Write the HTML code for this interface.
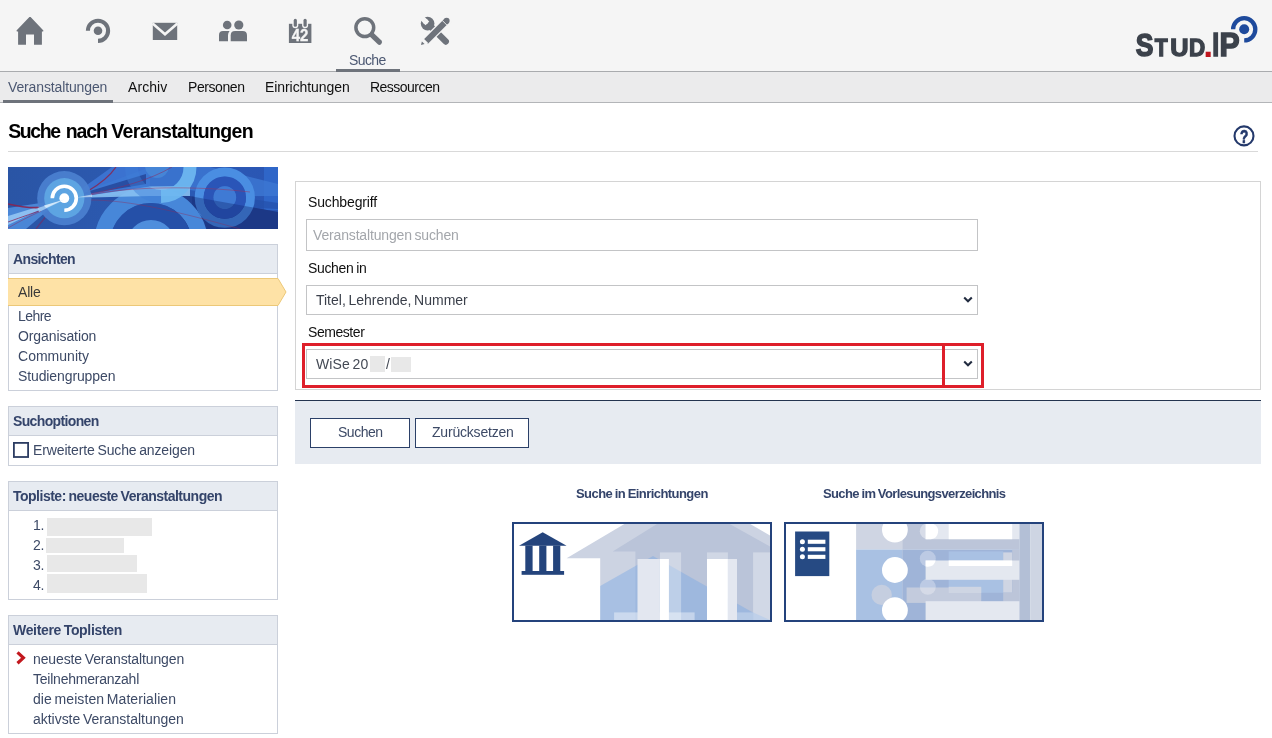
<!DOCTYPE html>
<html lang="de">
<head>
<meta charset="utf-8">
<title>Suche nach Veranstaltungen - Stud.IP</title>
<style>
*{box-sizing:border-box;margin:0;padding:0}
html,body{width:1272px;height:738px;overflow:hidden;background:#fff}
body{font-family:"Liberation Sans",sans-serif;font-size:14px;color:#000;position:relative}
.abs{position:absolute}
.t{position:absolute;white-space:nowrap;line-height:1;display:block;will-change:transform}
#header{left:0;top:0;width:1272px;height:72px;background:#f5f5f5;border-bottom:1px solid #a9abae}
#tabs{left:0;top:72px;width:1272px;height:31px;background:#ebebec;border-bottom:1px solid #b3b5b8}
.wid{position:absolute;left:8px;width:270px;border:1px solid #cbd0da;background:#fff}
.wid .hd{position:absolute;left:0;top:0;width:268px;height:29px;background:#e7ebf1;border-bottom:1px solid #cbd0da}
.fld{position:absolute;left:306px;width:672px;border:1px solid #c3c4c6;background:#fff}
.btn{position:absolute;top:418px;height:30px;border:1px solid #2b4068;background:#fff}
.gb{position:absolute;background:#e8e8e8}
svg{position:absolute;overflow:visible;will-change:transform}
</style>
</head>
<body>
<!-- HEADER -->
<div id="header" class="abs"></div>
<div id="tabs" class="abs"></div>
<div class="abs" style="left:336px;top:69px;width:64px;height:3px;background:#6e737b"></div>
<div class="abs" style="left:3px;top:100px;width:110px;height:3px;background:#6e737b"></div>

<!-- nav icons -->
<svg id="icons" style="left:0;top:0" width="470" height="72" viewBox="0 0 470 72" fill="#6e737b">
  <!-- home -->
  <path d="M29.4 17.1 L30.6 17.1 L43.4 30.6 L43.2 31.4 L41.9 31.4 L41.9 44.8 L34 44.8 L34 34.4 L26 34.4 L26 44.8 L18.1 44.8 L18.1 31.4 L16.8 31.4 L16.5 30.6 Z"/>
  <!-- studip -->
  <circle cx="98" cy="30.8" r="4.3"/>
  <path d="M87.9 30.8 A10.1 10.1 0 1 1 98 40.9" fill="none" stroke="#6e737b" stroke-width="4.1"/>
  <!-- mail -->
  <rect x="152.8" y="22.8" width="24.4" height="17.2"/>
  <path d="M152.6 23.4 L165 34.2 L177.4 23.4" fill="none" stroke="#f5f5f5" stroke-width="2.6"/>
  <!-- people -->
  <circle cx="227.2" cy="25" r="4.3"/>
  <circle cx="238.8" cy="25" r="4.6"/>
  <path d="M219 41.3 L219 35 Q219 31 223 31 L229.6 31 Q228 32.8 228 35.2 L228 41.3 Z"/>
  <path d="M230.7 41.3 L230.7 35.4 Q230.7 31 235 31 L242.6 31 Q247 31 247 35.4 L247 41.3 Z"/>
  <!-- calendar -->
  <rect x="288.9" y="23.8" width="22.5" height="19.2"/>
  <rect x="292.3" y="17" width="6" height="11.2" rx="3" fill="#f5f5f5"/>
  <rect x="302.1" y="17" width="6" height="11.2" rx="3" fill="#f5f5f5"/>
  <rect x="293.7" y="18.8" width="3.2" height="8" rx="1.6"/>
  <rect x="303.5" y="18.8" width="3.2" height="8" rx="1.6"/>
  <text x="300" y="41" text-anchor="middle" font-family="Liberation Sans,sans-serif" font-weight="700" font-size="16.2" fill="#f5f5f5" stroke="#f5f5f5" stroke-width="0.35" textLength="16.6" lengthAdjust="spacingAndGlyphs">42</text>
  <!-- search -->
  <circle cx="364.8" cy="27.6" r="8.9" fill="none" stroke="#6e737b" stroke-width="3.5"/>
  <path d="M371.8 34.8 L379.4 42.2" fill="none" stroke="#6e737b" stroke-width="5.2" stroke-linecap="round"/>
  <!-- tools -->
  <g id="tools">
    <path d="M428.2 24 L445.8 41.6" fill="none" stroke="#6e737b" stroke-width="6.3" stroke-linecap="round"/>
    <circle cx="427.6" cy="23.6" r="6.8"/>
    <path d="M427.4 23.4 L419 15 " fill="none" stroke="#f5f5f5" stroke-width="5.2"/>
    <circle cx="425.6" cy="21.6" r="2.6" fill="#f5f5f5"/>
    <path d="M448.4 19 L424.6 42.8" fill="none" stroke="#f5f5f5" stroke-width="8.6" stroke-linecap="butt"/>
    <path d="M446.6 20.8 L425.8 41.6" fill="none" stroke="#6e737b" stroke-width="6" stroke-linecap="butt"/>
    <circle cx="446.6" cy="20.8" r="3"/>
    <path d="M442.4 20.6 L446.8 25" stroke="#f5f5f5" stroke-width="0.9" fill="none"/>
    <path d="M423 39 L427.4 43.4" stroke="#f5f5f5" stroke-width="1.6" fill="none"/>
    <path d="M421 44.9 L421.9 41.4 L424.6 44 Z"/>
  </g>
</svg>

<!-- LOGO -->
<svg id="logo" style="left:1130px;top:10px" width="135" height="55" viewBox="1130 10 135 55" font-family="Liberation Sans,sans-serif" font-weight="700" fill="#3c424b" stroke="#3c424b" stroke-linejoin="miter">
  <text transform="translate(1135.80 56.38) scale(0.833 1)" font-size="31.8" stroke-width="1.60">S</text>
  <text transform="translate(1154.64 56.45) scale(0.886 1)" font-size="23.9" stroke-width="1.30">T</text>
  <text transform="translate(1170.13 56.45) scale(1.059 1)" font-size="23.9" stroke-width="1.30">U</text>
  <text transform="translate(1189.08 56.45) scale(0.939 1)" font-size="23.9" stroke-width="1.30">D</text>
  <text transform="translate(1203.30 57.20)" font-size="35.7" stroke="none" fill="#c0161f">.</text>
  <text transform="translate(1212.30 56.35) scale(0.774 1)" font-size="32.3" stroke-width="1.50">I</text>
  <text transform="translate(1219.44 56.35) scale(0.934 1)" font-size="32.3" stroke-width="1.50">P</text>
  <circle cx="1244.2" cy="29.3" r="5" fill="#1e4a9c" stroke="none"/>
  <path d="M1233.1 29.3 A11.1 11.1 0 1 1 1244.2 40.4" fill="none" stroke="#1e4a9c" stroke-width="4.3"/>
</svg>

<!-- help icon -->
<svg style="left:1232px;top:124px" width="24" height="24" viewBox="0 0 24 24">
  <circle cx="12" cy="11.9" r="9.5" fill="#fff" stroke="#24396b" stroke-width="2.1"/>
  <text transform="translate(12.1 18.8) scale(0.72 1)" text-anchor="middle" font-family="Liberation Sans,sans-serif" font-weight="700" font-size="19" fill="#24396b" stroke="#24396b" stroke-width="0.7">?</text>
</svg>
<div class="abs" style="left:8px;top:151px;width:1250px;height:1px;background:#d9d9d9"></div>

<!-- SIDEBAR -->
<svg id="sbimg" style="left:8px;top:167px;overflow:hidden" width="270" height="62" viewBox="8 167 270 62">
  <defs>
    <clipPath id="sbc"><rect x="8" y="167" width="270" height="62"/></clipPath>
    <linearGradient id="sbg" x1="0" y1="0" x2="1" y2="0">
      <stop offset="0" stop-color="#2a55a5"/><stop offset="0.5" stop-color="#2c5ab2"/><stop offset="1" stop-color="#2a56b4"/>
    </linearGradient>
  </defs>
  <g clip-path="url(#sbc)">
    <rect x="8" y="167" width="270" height="62" fill="url(#sbg)"/>
    <rect x="264" y="167" width="14" height="43" fill="#2f66c8"/>
    <!-- beams to right -->
    <path d="M70 197 L112 167 L150 167 L150 190 Z" fill="#3b72d0"/>
    <path d="M70 197 L150 167 L210 167 L278 184 L278 196 Z" fill="#3d78d3" opacity=".8"/>
    <path d="M70 197 L146 174 L146 184 Z" fill="#24479a" opacity=".85"/>
    <path d="M72 198 L190 190 L278 203 L278 209 Z" fill="#2450aa" opacity=".7"/>
    <!-- beams to left -->
    <path d="M60 200 L8 208 L8 229 L26 229 Z" fill="#4a86d6"/>
    <path d="M60 200 L8 216 L8 225 Z" fill="#8cbff1"/>
    <!-- right dark lower wedge -->
    <path d="M184 195 L278 212 L278 229 L150 229 Z" fill="#213f8e"/>
    <!-- big bottom ring -->
    <circle cx="151" cy="244" r="49" fill="none" stroke="#4787d9" stroke-width="16"/>
    <circle cx="151" cy="244" r="41" fill="#2550a8"/>
    <circle cx="151" cy="244" r="24" fill="#4f8edc"/>
    <!-- light beam over ring top -->
    <path d="M72 198 L150 186.5 L190 186 L190 196 L150 196 Z" fill="#8cc4f3" opacity=".85"/>
    <!-- top crescent ring -->
    <path d="M190 167 A29.5 29.5 0 0 1 161 196.5" fill="none" stroke="#6db6ef" stroke-width="13" opacity=".95"/>
    <path d="M161 196.5 A29.5 29.5 0 0 1 131.5 167" fill="none" stroke="#3f7fd8" stroke-width="13" opacity=".45"/>
    <circle cx="157" cy="166" r="12" fill="#4a8ad8" opacity=".8"/>
    <!-- right rings -->
    <circle cx="224.8" cy="197.6" r="25.6" fill="none" stroke="#4a8ee2" stroke-width="9"/>
    <circle cx="224.8" cy="197.6" r="16.3" fill="none" stroke="#2a55b8" stroke-width="9.8"/>
    <circle cx="224.8" cy="197.6" r="11.4" fill="#3f7ad4"/>
    <path d="M192 196.4 L278 212 L278 229 L207 229 A57 57 0 0 0 192 204 Z" fill="#16307c" opacity=".42"/>
    <!-- red curves (under the circles) -->
    <path d="M8 204 C25 208 38 209 50 206" fill="none" stroke="#8a2450" stroke-width="1.6" opacity=".9"/>
    <path d="M88 191 C100 184 110 176 116 167" fill="none" stroke="#8a2450" stroke-width="1.3" opacity=".85"/>
    <path d="M8 222 C22 217 36 212 48 208" fill="none" stroke="#8a2a60" stroke-width="1" opacity=".8"/>
    <path d="M8 228 C20 221 34 214 46 209" fill="none" stroke="#8a2a60" stroke-width=".8" opacity=".6"/>
    <path d="M90 195 C130 186 200 186 250 192" fill="none" stroke="#a03058" stroke-width=".8" opacity=".6"/>
    <path d="M90 194 C120 188 150 180 172 167" fill="none" stroke="#8a2a60" stroke-width=".9" opacity=".6"/>
    <path d="M90 200 C130 200 180 212 240 229" fill="none" stroke="#902a58" stroke-width=".8" opacity=".5"/>
    <path d="M36 229 C42 221 47 215 52 210" fill="none" stroke="#7a2a60" stroke-width="1.4" opacity=".6"/>
    <!-- left concentric -->
    <circle cx="64.3" cy="198.2" r="27.1" fill="#4a80d0" opacity=".93"/>
    <circle cx="64.3" cy="198.2" r="20.1" fill="#5da4e2"/>
    <path d="M64 200 L37.5 208 L39 212 Z" fill="#a8d2f6" opacity=".8"/>
    <path d="M52.3 198.2 A12 12 0 1 1 64.3 210.2" fill="none" stroke="#fff" stroke-width="3.6"/>
    <circle cx="64.3" cy="198.2" r="4.9" fill="#fff"/>
    <path d="M64.3 199.5 L44 205.5 L46 208 Z" fill="#d8ebfb" opacity=".9"/>
    <path d="M76 197.5 L92 194.5 L92 197 Z" fill="#cfe6fa" opacity=".7"/>
  </g>
</svg>

<div class="wid" style="top:244px;height:147px"><div class="hd"></div></div>
<svg style="left:8px;top:278px" width="280" height="28" viewBox="0 0 280 28">
  <path d="M0 0.5 L270 0.5 L278 14 L270 27.5 L0 27.5" fill="#fee2a6" stroke="#ecc878" stroke-width="1"/>
</svg>
<div class="wid" style="top:406px;height:60px"><div class="hd"></div></div>
<svg style="left:13px;top:442px" width="16" height="16" viewBox="0 0 16 16"><rect x="0.9" y="0.9" width="14.2" height="14.1" fill="#fff" stroke="#2c3c62" stroke-width="1.8"/></svg>
<div class="wid" style="top:481px;height:119px"><div class="hd"></div></div>
<div class="gb" style="left:46.7px;top:518.3px;width:105.3px;height:17.4px"></div>
<div class="gb" style="left:45.7px;top:538.3px;width:78.3px;height:14.4px"></div>
<div class="gb" style="left:46.7px;top:555px;width:90.3px;height:16.7px"></div>
<div class="gb" style="left:46.7px;top:574.3px;width:100.3px;height:18.4px"></div>
<div class="wid" style="top:615px;height:119px"><div class="hd"></div></div>
<svg style="left:16px;top:651.2px" width="10" height="13.6" viewBox="0 0 10 13.6">
  <path d="M1.5 1.3 L7.4 6.8 L1.5 12.3" fill="none" stroke="#c2181e" stroke-width="3.2"/>
</svg>

<!-- CONTENT -->
<div id="formbox" class="abs" style="left:295px;top:181px;width:966px;height:209px;border:1px solid #d4d4d4;background:#fff"></div>
<div class="fld" style="top:219px;height:32px"></div>
<div class="fld" style="top:285px;height:30px"></div>
<div class="fld" style="top:349px;height:30px"></div>
<div class="gb" style="left:370.2px;top:356.3px;width:14.5px;height:15.4px"></div>
<div class="gb" style="left:391px;top:357px;width:20px;height:14.7px"></div>
<svg style="left:963px;top:296.4px" width="10" height="8" viewBox="0 0 10 8"><path d="M1.2 1.6 L5 5.2 L8.8 1.6" fill="none" stroke="#222c40" stroke-width="2.1"/></svg>
<svg style="left:963px;top:359.5px" width="10" height="8" viewBox="0 0 10 8"><path d="M1.2 1.6 L5 5.2 L8.8 1.6" fill="none" stroke="#222c40" stroke-width="2.1"/></svg>
<!-- red highlight boxes -->
<div class="abs" style="left:302px;top:343px;width:643px;height:45px;border:3px solid #de1f2a"></div>
<div class="abs" style="left:942px;top:343px;width:42px;height:45px;border:3px solid #de1f2a"></div>

<div id="formfoot" class="abs" style="left:295px;top:400px;width:966px;height:64px;background:#e7ebf1;border-top:1px solid #24344f"></div>
<div class="btn" style="left:310px;width:100px"></div>
<div class="btn" style="left:415px;width:114px"></div>

<!-- TILES -->
<svg id="tile1" style="left:512px;top:522px" width="260" height="100" viewBox="512 522 260 100">
  <defs><clipPath id="t1c"><rect x="514" y="524" width="256" height="96"/></clipPath></defs>
  <rect x="513" y="523" width="258" height="98" fill="#fff" stroke="#24437c" stroke-width="2"/>
  <g clip-path="url(#t1c)">
    <path d="M566.6 558.3 L624.4 524 L750.2 524 L770 535.6 L770 620 L600.2 620 L600.2 558.3 Z" fill="#ccd3e2"/>
    <path d="M612.7 551.4 L657 524 L729.7 524 L770 546.5 L770 620 L635.4 620 L635.4 551.4 Z" fill="#bac4d9"/>
    <path d="M600.2 586 L653 556 L751.6 611.7 L770 620 L600.2 620 Z" fill="rgb(125,170,228)" fill-opacity=".444"/>
    <rect x="659.9" y="552.4" width="21.2" height="68" fill="#fff" fill-opacity=".32"/>
    <rect x="707" y="552.4" width="20.9" height="68" fill="#fff" fill-opacity=".32"/>
    <rect x="753.1" y="552.4" width="17" height="68" fill="#fff" fill-opacity=".34"/>
    <rect x="614.1" y="612.4" width="80.5" height="8" fill="#fff" fill-opacity=".4"/>
    <rect x="737" y="612.4" width="16.1" height="8" fill="#fff" fill-opacity=".25"/>
    <rect x="637.5" y="559" width="22.4" height="61" fill="#e3e7f0"/>
    <rect x="659.9" y="559" width="9" height="61" fill="#fff"/>
    <rect x="707" y="559" width="20.9" height="61" fill="#fff"/>
    <rect x="727.9" y="559" width="9.1" height="61" fill="#e3e7f0"/>
  </g>
  <g fill="#24447c">
    <path d="M542.7 532.2 L566.6 545.8 L519 545.8 Z"/>
    <rect x="525.3" y="545.6" width="7.3" height="26"/>
    <rect x="539.2" y="545.6" width="7.2" height="26"/>
    <rect x="553.1" y="545.6" width="7.2" height="26"/>
    <rect x="521.6" y="571" width="42.5" height="3.8"/>
  </g>
</svg>
<svg id="tile2" style="left:784px;top:522px" width="260" height="100" viewBox="784 522 260 100">
  <defs><clipPath id="t2c"><rect x="786" y="524" width="256" height="96"/></clipPath></defs>
  <rect x="785" y="523" width="258" height="98" fill="#fff" stroke="#24437c" stroke-width="2"/>
  <g clip-path="url(#t2c)">
    <rect x="856.1" y="524" width="46.1" height="25.5" fill="#cfd5e3"/>
    <rect x="902.2" y="524" width="117.1" height="25.5" fill="#bcc5d9"/>
    <rect x="856.1" y="549.5" width="46.1" height="70.5" fill="#a9c1e3"/>
    <rect x="902.2" y="549.5" width="117.1" height="70.5" fill="#9fb4d8"/>
    <rect x="1019.3" y="524" width="10.9" height="96" fill="#b3bfd6"/>
    <rect x="1030.2" y="524" width="12" height="96" fill="#ced5e3"/>
    <!-- second-row blue -->
    <rect x="948.7" y="551.4" width="54.5" height="48.6" fill="#a9c1e3"/>
    <rect x="981.2" y="592.8" width="22" height="7.4" fill="#9fb4d8"/>
    <rect x="1003.2" y="552.4" width="9" height="40.3" fill="#cfd5e3"/>
    <rect x="1003.2" y="592.7" width="16.1" height="9" fill="#bcc5d9"/>
    <rect x="1012.2" y="549.5" width="7.1" height="52" fill="#bcc5d9"/>
    <!-- grey rect -->
    <rect x="906.6" y="587.5" width="74.6" height="15.4" fill="#c3cbdd"/>
    <rect x="948.7" y="586.8" width="32.5" height="6.2" fill="#ced5e3"/>
    <circle cx="881.7" cy="594.9" r="10.2" fill="#c5cee0"/>
    <!-- big white circles -->
    <circle cx="894.9" cy="529.7" r="12.9" fill="#fff"/>
    <circle cx="894.9" cy="570" r="12.9" fill="#fff"/>
    <circle cx="894.9" cy="610.2" r="12.9" fill="#fff"/>
    <!-- small circles -->
    <circle cx="927.8" cy="531.2" r="8" fill="#fff" fill-opacity=".4"/>
    <circle cx="927.8" cy="558.7" r="8" fill="#fff" fill-opacity=".3"/>
    <circle cx="927.8" cy="586.8" r="8" fill="#fff" fill-opacity=".3"/>
    <!-- bars -->
    <rect x="925.6" y="524" width="93.7" height="15.2" fill="#e4e8f0"/>
    <rect x="948.7" y="524" width="63.5" height="15.2" fill="#fff"/>
    <path d="M925.6 524 L925.6 539.2 L931 539.2 A8 8 0 0 0 933.5 524 Z" fill="#fff"/>
    <rect x="925.6" y="560.5" width="93.7" height="19.3" fill="#e4e8f0"/>
    <rect x="948.7" y="560.5" width="63.5" height="5.5" fill="#fff"/>
    <path d="M925.6 560.5 L935.6 560.5 A8 8 0 0 1 927.8 566.7 L925.6 566.5 Z" fill="#fff"/>
    <rect x="925.6" y="601.2" width="93.7" height="19" fill="#e4e8f0"/>
  </g>
  <rect x="795.1" y="531.5" width="34.2" height="44.6" fill="#264a83"/>
  <g fill="#fff">
    <circle cx="802.4" cy="541.7" r="2.5"/><circle cx="802.4" cy="549.2" r="2.5"/><circle cx="802.4" cy="556.8" r="2.5"/>
    <rect x="807.8" y="539.7" width="17.6" height="4.1"/><rect x="807.8" y="547.2" width="17.6" height="4.1"/><rect x="807.8" y="554.8" width="17.6" height="4.1"/>
  </g>
</svg>

<!-- TEXT -->
<span class="t" style="left:349.3px;top:52.8px;font-size:14px;color:#4c5872;letter-spacing:-0.62px;">Suche</span>
<span class="t" style="left:8.3px;top:79.8px;font-size:14px;color:#4c5872;letter-spacing:-0.13px;">Veranstaltungen</span>
<span class="t" style="left:127.8px;top:79.8px;font-size:14px;color:#101010;letter-spacing:0.08px;">Archiv</span>
<span class="t" style="left:188.0px;top:79.8px;font-size:14px;color:#101010;letter-spacing:-0.43px;">Personen</span>
<span class="t" style="left:265.3px;top:79.8px;font-size:14px;color:#101010;letter-spacing:-0.07px;">Einrichtungen</span>
<span class="t" style="left:370.3px;top:79.8px;font-size:14px;color:#101010;letter-spacing:-0.53px;">Ressourcen</span>
<span class="t" style="left:0;top:122.1px;width:400px;height:19.5px;font-size:19.5px;font-weight:700;color:#000;"><span style="position:absolute;left:8.3px;top:0;letter-spacing:-1.43px">Suche</span> <span style="position:absolute;left:65.8px;top:0;letter-spacing:-1.15px">nach</span> <span style="position:absolute;left:111.3px;top:0;letter-spacing:-0.67px">Veranstaltungen</span></span>
<span class="t" style="left:13.3px;top:251.8px;font-size:14px;font-weight:700;color:#34446a;letter-spacing:-0.63px;">Ansichten</span>
<span class="t" style="left:17.7px;top:284.8px;font-size:14px;color:#3a3a3a;letter-spacing:-0.19px;">Alle</span>
<span class="t" style="left:18.3px;top:308.8px;font-size:14px;color:#3d4a66;letter-spacing:-0.56px;">Lehre</span>
<span class="t" style="left:18.3px;top:328.8px;font-size:14px;color:#3d4a66;letter-spacing:-0.09px;">Organisation</span>
<span class="t" style="left:18.3px;top:348.8px;font-size:14px;color:#3d4a66;letter-spacing:0.02px;">Community</span>
<span class="t" style="left:18.3px;top:368.8px;font-size:14px;color:#3d4a66;letter-spacing:-0.11px;">Studiengruppen</span>
<span class="t" style="left:13.3px;top:413.8px;font-size:14px;font-weight:700;color:#34446a;letter-spacing:-0.64px;">Suchoptionen</span>
<span class="t" style="left:33.3px;top:443.1px;font-size:14px;color:#3d4a66;letter-spacing:-0.13px;word-spacing:-1.06px;">Erweiterte Suche anzeigen</span>
<span class="t" style="left:13.3px;top:489.1px;font-size:14px;font-weight:700;color:#34446a;letter-spacing:-0.50px;word-spacing:-0.69px;">Topliste: neueste Veranstaltungen</span>
<span class="t" style="left:33.3px;top:518.1px;font-size:14px;color:#3d4a66;letter-spacing:-0.34px;">1.</span>
<span class="t" style="left:33.3px;top:538.1px;font-size:14px;color:#3d4a66;letter-spacing:-0.34px;">2.</span>
<span class="t" style="left:33.3px;top:558.1px;font-size:14px;color:#3d4a66;letter-spacing:-0.34px;">3.</span>
<span class="t" style="left:33.3px;top:578.1px;font-size:14px;color:#3d4a66;letter-spacing:-0.34px;">4.</span>
<span class="t" style="left:13.3px;top:622.8px;font-size:14px;font-weight:700;color:#34446a;letter-spacing:-0.33px;word-spacing:-0.86px;">Weitere Toplisten</span>
<span class="t" style="left:33.3px;top:651.8px;font-size:14px;color:#3d4a66;letter-spacing:-0.12px;word-spacing:-1.07px;">neueste Veranstaltungen</span>
<span class="t" style="left:33.3px;top:671.8px;font-size:14px;color:#3d4a66;letter-spacing:-0.23px;">Teilnehmeranzahl</span>
<span class="t" style="left:33.3px;top:691.8px;font-size:14px;color:#3d4a66;letter-spacing:0.07px;word-spacing:-1.26px;">die meisten Materialien</span>
<span class="t" style="left:33.3px;top:711.8px;font-size:14px;color:#3d4a66;letter-spacing:-0.03px;word-spacing:-1.16px;">aktivste Veranstaltungen</span>
<span class="t" style="left:308.3px;top:194.8px;font-size:14px;color:#101010;letter-spacing:-0.14px;">Suchbegriff</span>
<span class="t" style="left:312.7px;top:227.8px;font-size:14px;color:#a3a6ab;letter-spacing:-0.16px;word-spacing:-1.03px;">Veranstaltungen suchen</span>
<span class="t" style="left:308.3px;top:260.8px;font-size:14px;color:#101010;letter-spacing:-0.34px;word-spacing:-0.85px;">Suchen in</span>
<span class="t" style="left:315.8px;top:293.3px;font-size:14px;color:#3a3f4a;letter-spacing:-0.01px;word-spacing:-1.18px;">Titel, Lehrende, Nummer</span>
<span class="t" style="left:308.3px;top:325.1px;font-size:14px;color:#101010;letter-spacing:-0.44px;">Semester</span>
<span class="t" style="left:315.8px;top:357.1px;font-size:14px;color:#444a55;letter-spacing:0.09px;word-spacing:-1.28px;">WiSe 20</span>
<span class="t" style="left:386.0px;top:357.1px;font-size:14px;color:#444a55;letter-spacing:0.61px;">/</span>
<span class="t" style="left:337.7px;top:425.1px;font-size:14px;color:#3d4a66;letter-spacing:-0.48px;">Suchen</span>
<span class="t" style="left:431.7px;top:425.1px;font-size:14px;color:#3d4a66;letter-spacing:-0.20px;">Zurücksetzen</span>
<span class="t" style="left:576.0px;top:486.7px;font-size:13px;font-weight:700;color:#34446a;letter-spacing:-0.56px;word-spacing:-0.54px;">Suche in Einrichtungen</span>
<span class="t" style="left:823.0px;top:486.7px;font-size:13px;font-weight:700;color:#34446a;letter-spacing:-0.62px;word-spacing:-0.49px;">Suche im Vorlesungsverzeichnis</span>
</body>
</html>
